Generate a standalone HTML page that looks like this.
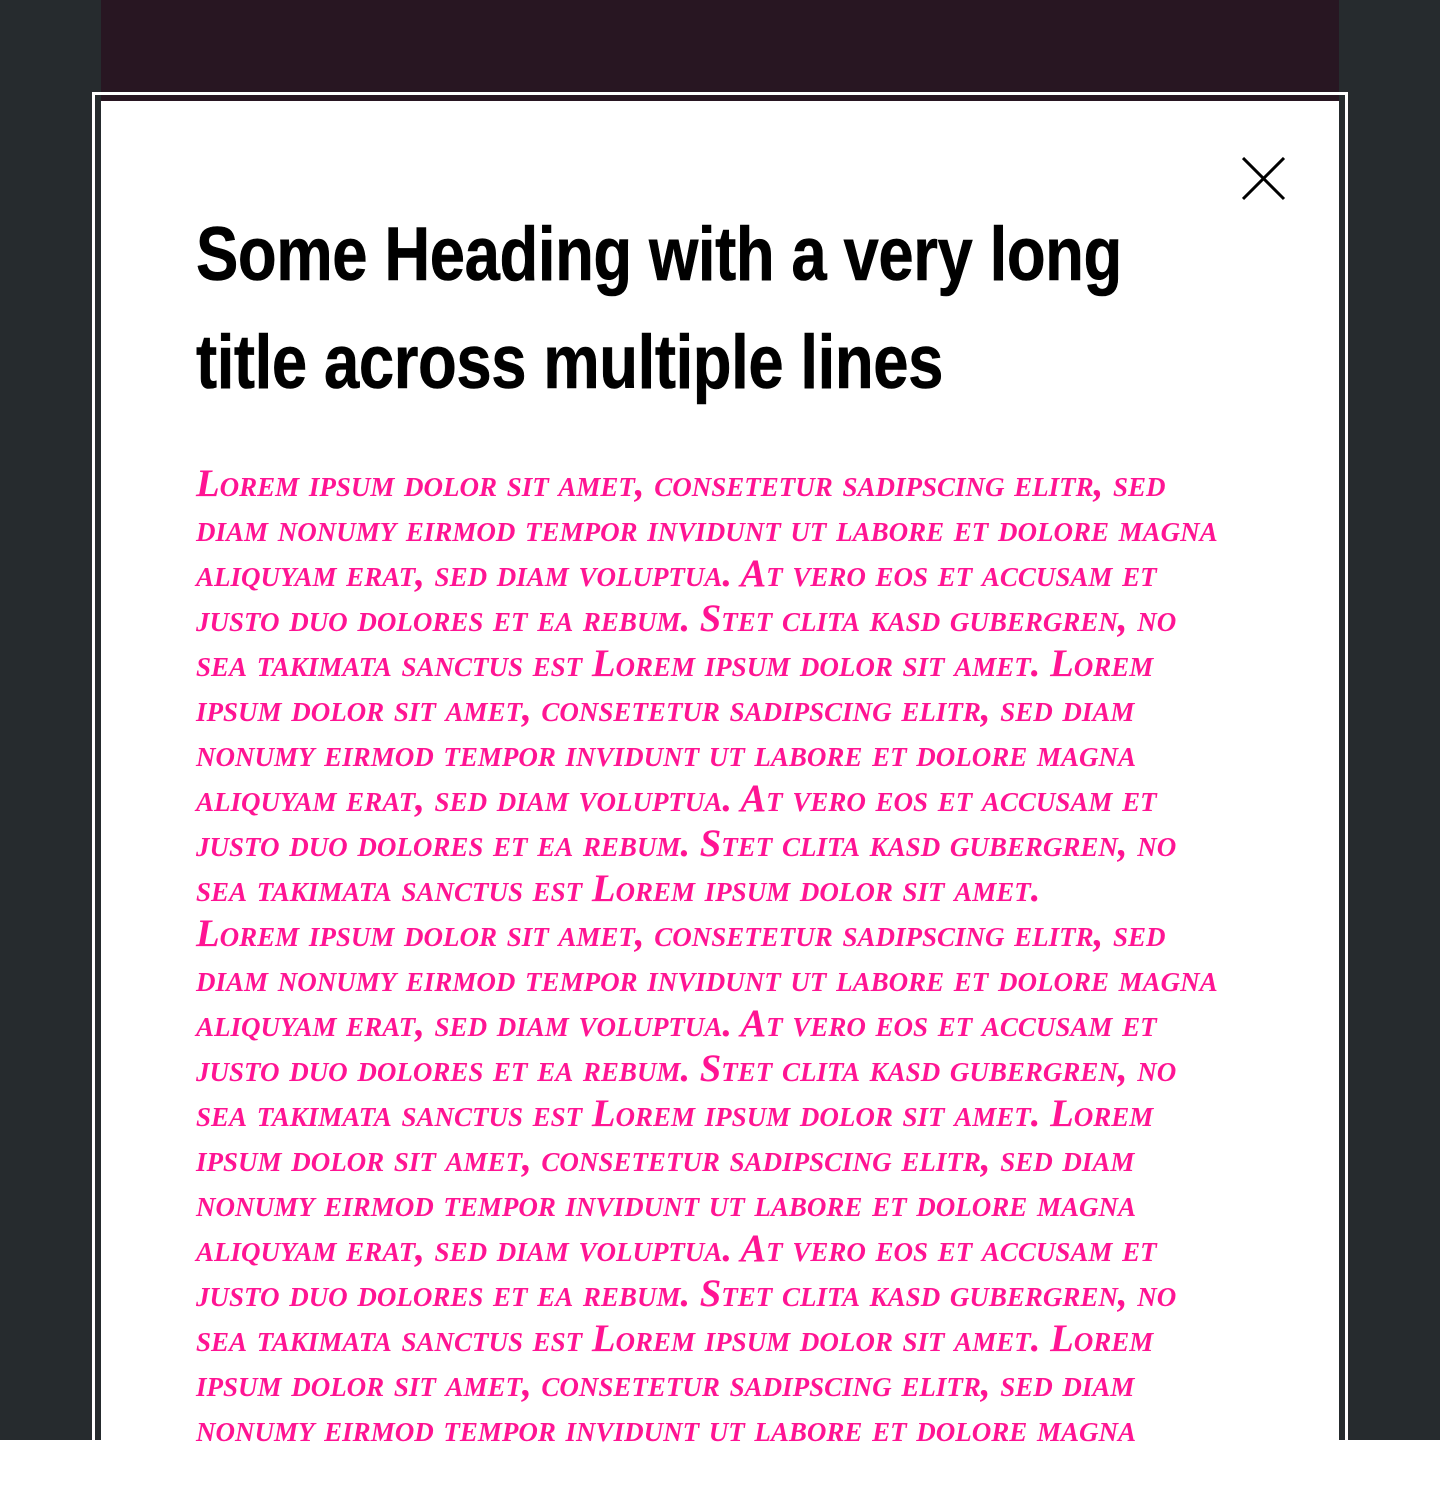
<!DOCTYPE html>
<html><head><meta charset="utf-8"><style>
html{background:#fff;margin:0}
body{margin:0;width:1440px;height:1440px;background:#262b2e;position:relative;overflow:hidden}
.band{position:absolute;left:101px;top:0;width:1238px;height:101px;background:#281622}
.outline{position:absolute;left:92px;top:92px;width:1250px;height:1400px;border:3px solid #fff;box-sizing:content-box}
.modal{position:absolute;left:101px;top:101px;width:1238px;height:1400px;background:#fff}
h1{position:absolute;left:95px;top:100px;margin:0;font-family:"Liberation Sans Narrow","Liberation Sans",sans-serif;font-weight:bold;font-size:76px;line-height:108px;color:#000;letter-spacing:-0.5px;white-space:nowrap;transform:scaleX(0.835);transform-origin:0 0;-webkit-text-stroke:0.6px #000}
.close{position:absolute;left:1141px;top:56px}
.txt{position:absolute;left:95px;top:361px;font-family:"Liberation Serif",serif;font-style:italic;font-weight:bold;font-variant:small-caps;font-size:38.7px;line-height:45px;color:#ff1493;white-space:nowrap}
</style></head><body>
<div class="band"></div>
<div class="outline"></div>
<div class="modal">
<svg class="close" width="44" height="44" viewBox="0 0 44 44"><path d="M1 1L42 42M42 1L1 42" stroke="#000" stroke-width="3"/></svg>
<h1>Some Heading with a very long<br>title across multiple lines</h1>
<div class="txt">Lorem ipsum dolor sit amet, consetetur sadipscing elitr, sed<br>
diam nonumy eirmod tempor invidunt ut labore et dolore magna<br>
aliquyam erat, sed diam voluptua. At vero eos et accusam et<br>
justo duo dolores et ea rebum. Stet clita kasd gubergren, no<br>
sea takimata sanctus est Lorem ipsum dolor sit amet. Lorem<br>
ipsum dolor sit amet, consetetur sadipscing elitr, sed diam<br>
nonumy eirmod tempor invidunt ut labore et dolore magna<br>
aliquyam erat, sed diam voluptua. At vero eos et accusam et<br>
justo duo dolores et ea rebum. Stet clita kasd gubergren, no<br>
sea takimata sanctus est Lorem ipsum dolor sit amet.<br>
Lorem ipsum dolor sit amet, consetetur sadipscing elitr, sed<br>
diam nonumy eirmod tempor invidunt ut labore et dolore magna<br>
aliquyam erat, sed diam voluptua. At vero eos et accusam et<br>
justo duo dolores et ea rebum. Stet clita kasd gubergren, no<br>
sea takimata sanctus est Lorem ipsum dolor sit amet. Lorem<br>
ipsum dolor sit amet, consetetur sadipscing elitr, sed diam<br>
nonumy eirmod tempor invidunt ut labore et dolore magna<br>
aliquyam erat, sed diam voluptua. At vero eos et accusam et<br>
justo duo dolores et ea rebum. Stet clita kasd gubergren, no<br>
sea takimata sanctus est Lorem ipsum dolor sit amet. Lorem<br>
ipsum dolor sit amet, consetetur sadipscing elitr, sed diam<br>
nonumy eirmod tempor invidunt ut labore et dolore magna</div>
</div>
</body></html>
